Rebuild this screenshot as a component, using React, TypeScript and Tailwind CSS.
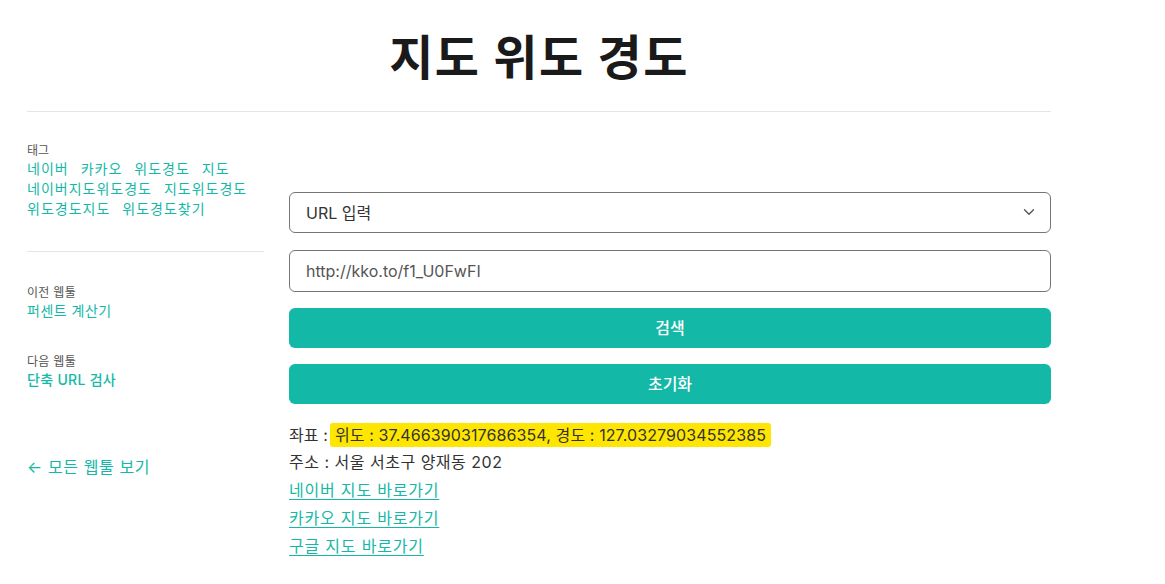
import { ChevronDown } from 'lucide-react'

const tags = ['네이버', '카카오', '위도경도', '지도', '네이버지도위도경도', '지도위도경도', '위도경도지도', '위도경도찾기']

const mapLinks = ['네이버 지도 바로가기', '카카오 지도 바로가기', '구글 지도 바로가기']

export default function App() {
  return (
    <div className="min-h-[584px] bg-white text-[#333] font-['Inter','Noto_Sans_CJK_KR',sans-serif]">
      <div className="ml-[27px] w-[1024px]">
        {/* header */}
        <header className="pt-[29px] pb-[24px] border-b border-[#e5e5e5]">
          <h1 className="text-center text-[48px] leading-[58px] font-bold text-[#1a1a1a] tracking-[1.5px]">지도 위도 경도</h1>
        </header>

        <div className="flex gap-[25px]">
          {/* sidebar */}
          <aside className="w-[237px] shrink-0 pt-[31px]">
            <div className="pb-[32px] border-b border-[#e5e5e5]">
              <div className="text-[12px] leading-[16px] text-[#555]">태그</div>
              <div className="flex flex-wrap text-[14px] leading-[20px] tracking-[1px] text-[#14b8a6]">
                {tags.map((t) => (
                  <a key={t} href="#" className="mr-[12px]">{t}</a>
                ))}
              </div>
            </div>

            <div className="pt-[33px]">
              <div className="text-[12px] leading-[16px] tracking-[0.3px] text-[#555]">이전 웹툴</div>
              <a href="#" className="block text-[14px] leading-[20px] tracking-[0.5px] text-[#14b8a6]">퍼센트 계산기</a>
            </div>
            <div className="pt-[33px]">
              <div className="text-[12px] leading-[16px] tracking-[0.3px] text-[#555]">다음 웹툴</div>
              <a href="#" className="block text-[14px] leading-[20px] tracking-[0.3px] font-medium text-[#14b8a6]">단축 URL 검사</a>
            </div>
            <a href="#" className="block mt-[66px] text-[16px] leading-[22px] tracking-[0.6px] text-[#14b8a6]">← 모든 웹툴 보기</a>
          </aside>

          {/* main */}
          <main className="flex-1 pt-[80px]">
            <div className="flex flex-col gap-[17px]">
              <div className="relative">
                <select className="w-full h-[41px] appearance-none rounded-[6px] border border-[#767676] bg-white pl-[16px] pr-10 text-[16px] text-[#333] outline-none">
                  <option>URL 입력</option>
                </select>
                <ChevronDown size={18} strokeWidth={1.8} className="absolute right-[13px] top-[11px] text-[#555] pointer-events-none" />
              </div>
              <input
                className="w-full h-[42px] rounded-[6px] border border-[#767676] px-[16px] text-[16px] text-[#555] outline-none"
                defaultValue="http://kko.to/f1_U0FwFI"
              />
            </div>
            <div className="mt-[16px] flex flex-col gap-[16px]">
              <button className="h-[40px] w-full rounded-[6px] bg-[#14b8a6] text-[16px] font-medium text-white">검색</button>
              <button className="h-[40px] w-full rounded-[6px] bg-[#14b8a6] text-[16px] font-medium text-white">초기화</button>
            </div>

            <div className="mt-[17px] text-[16px] leading-[28px] text-[#333]">
              <div className="tracking-[0.1px]">
                좌표 :<span className="ml-[2px] bg-[#ffe600] px-[5px] py-[2px] rounded-[3px]">위도 : 37.466390317686354, 경도 : 127.03279034552385</span>
              </div>
              <div className="-mt-px tracking-[0.5px]">주소 : 서울 서초구 양재동 202</div>
              {mapLinks.map((l) => (
                <a key={l} href="#" className="block underline underline-offset-[3px] tracking-[0.8px] text-[#14b8a6]">{l}</a>
              ))}
            </div>
          </main>
        </div>
      </div>
    </div>
  )
}
